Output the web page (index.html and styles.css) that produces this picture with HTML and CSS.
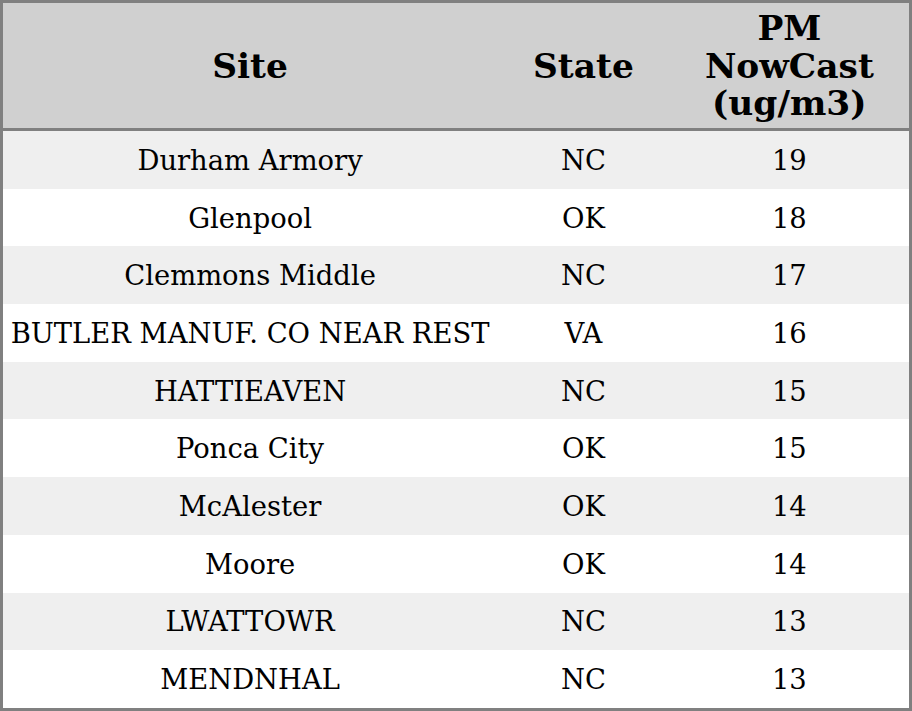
FILE: index.html
```html
<!DOCTYPE html>
<html>
<head>
<meta charset="utf-8">
<link rel="stylesheet" href="styles.css">
</head>
<body>
<table class="aq">
  <colgroup>
    <col class="c-site">
    <col class="c-state">
    <col class="c-pm">
  </colgroup>
  <thead>
    <tr><th>Site</th><th>State</th><th>PM<br>NowCast<br>(ug/m3)</th></tr>
  </thead>
  <tbody>
    <tr><td>Durham Armory</td><td>NC</td><td>19</td></tr>
    <tr><td>Glenpool</td><td>OK</td><td>18</td></tr>
    <tr><td>Clemmons Middle</td><td>NC</td><td>17</td></tr>
    <tr><td>BUTLER MANUF. CO NEAR REST</td><td>VA</td><td>16</td></tr>
    <tr><td>HATTIEAVEN</td><td>NC</td><td>15</td></tr>
    <tr><td>Ponca City</td><td>OK</td><td>15</td></tr>
    <tr><td>McAlester</td><td>OK</td><td>14</td></tr>
    <tr><td>Moore</td><td>OK</td><td>14</td></tr>
    <tr><td>LWATTOWR</td><td>NC</td><td>13</td></tr>
    <tr><td>MENDNHAL</td><td>NC</td><td>13</td></tr>
  </tbody>
</table>
</body>
</html>
```
FILE: styles.css
```css
html, body {
  margin: 0;
  padding: 0;
  background: #ffffff;
}
.aq {
  width: 912px;
  height: 711px;
  border-collapse: collapse;
  table-layout: fixed;
  border: 3px solid #808080;
  font-family: "DejaVu Serif", serif;
  color: #000;
}
.c-site { width: 494px; }
.c-state { width: 172px; }
.c-pm { width: 240px; }
.aq th {
  background: #d0d0d0;
  font-size: 34.4px;
  font-weight: bold;
  line-height: 37.5px;
  height: 123px;
  padding: 2px 0 0;
  text-align: center;
  vertical-align: middle;
  border-bottom: 3px solid #808080;
}
.aq td {
  font-size: 27.4px;
  height: 56.7px;
  padding: 1px 0 0;
  text-align: center;
  vertical-align: middle;
  white-space: nowrap;
}
.aq tbody tr:nth-child(odd) td {
  background: #efefef;
}
```
